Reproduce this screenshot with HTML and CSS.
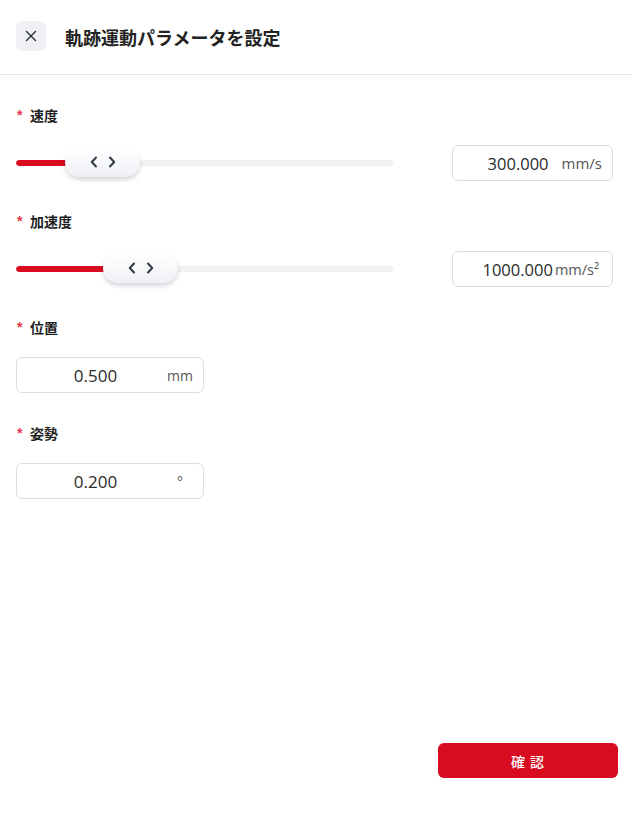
FILE: index.html
```html
<!DOCTYPE html>
<html lang="ja">
<head>
<meta charset="utf-8">
<title>軌跡運動パラメータを設定</title>
<link rel="stylesheet" href="styles.css">
</head>
<body>
<div class="page">
  <header class="header">
    <button class="close" aria-label="close">
      <svg width="12" height="12" viewBox="0 0 12 12"><path d="M1.5 1.5 L10.5 10.5 M10.5 1.5 L1.5 10.5" stroke="#2b2f36" stroke-width="1.4" stroke-linecap="round" fill="none"/></svg>
    </button>
    <h1 class="title">軌跡運動パラメータを設定</h1>
  </header>

  <main class="content">
    <section class="field">
      <div class="label"><span class="star">*</span>速度</div>
      <div class="row">
        <div class="slider">
          <div class="track"><div class="fill" style="width:52px"></div></div>
          <div class="thumb" style="left:49px">
            <svg width="26" height="12" viewBox="0 0 26 12"><path d="M6 1.5 L1.8 6 L6 10.5 M20 1.5 L24.2 6 L20 10.5" stroke="#333a45" stroke-width="2" stroke-linecap="round" stroke-linejoin="round" fill="none"/></svg>
          </div>
        </div>
        <div class="numbox">
          <span class="val">300.000</span><span class="unit">mm/s</span>
        </div>
      </div>
    </section>

    <section class="field">
      <div class="label"><span class="star">*</span>加速度</div>
      <div class="row">
        <div class="slider">
          <div class="track"><div class="fill" style="width:90px"></div></div>
          <div class="thumb" style="left:87px">
            <svg width="26" height="12" viewBox="0 0 26 12"><path d="M6 1.5 L1.8 6 L6 10.5 M20 1.5 L24.2 6 L20 10.5" stroke="#333a45" stroke-width="2" stroke-linecap="round" stroke-linejoin="round" fill="none"/></svg>
          </div>
        </div>
        <div class="numbox">
          <span class="val">1000.000</span><span class="unit tight">mm/s²</span>
        </div>
      </div>
    </section>

    <section class="field">
      <div class="label"><span class="star">*</span>位置</div>
      <div class="smallbox">
        <span class="sval">0.500</span><span class="sunit">mm</span>
      </div>
    </section>

    <section class="field">
      <div class="label"><span class="star">*</span>姿勢</div>
      <div class="smallbox">
        <span class="sval">0.200</span><span class="sunit">°</span>
      </div>
    </section>
  </main>

  <footer class="footer">
    <button class="confirm">確 認</button>
  </footer>
</div>
</body>
</html>
```

FILE: styles.css
```css
* { box-sizing: border-box; }
html, body { margin: 0; padding: 0; background: #fff; }
body {
  font-family: "Noto Sans CJK JP", "Noto Sans", sans-serif;
  color: #222;
}
.page {
  height: 813px;
  display: flex;
  flex-direction: column;
}
.header {
  height: 75px;
  border-bottom: 1px solid #e2e3e6;
  display: flex;
  align-items: center;
  padding: 0 16px 1px 16px;
  gap: 19px;
}
.close {
  width: 30px;
  height: 30px;
  border: none;
  border-radius: 6px;
  background: #f0f1f5;
  display: flex;
  align-items: center;
  justify-content: center;
  padding: 0;
  margin-top: -1px;
}
.title {
  margin: 0;
  font-size: 18px;
  font-weight: 700;
  color: #222;
  line-height: 24px;
}
.content {
  flex: 1;
  padding: 32px 18px 0 16px;
}
.field { margin-bottom: 32px; }
.label {
  font-size: 14px;
  font-weight: 700;
  line-height: 16px;
  height: 16px;
  margin-bottom: 22px;
  display: flex;
  align-items: center;
  color: #1f1f1f;
}
.star {
  color: #e8334a;
  font-family: "Liberation Sans", sans-serif;
  font-size: 14px;
  width: 14px;
  margin-left: 1px;
  margin-right: -1px;
}
.row {
  display: flex;
  align-items: center;
  justify-content: space-between;
  height: 36px;
}
.slider {
  position: relative;
  width: 378px;
  height: 36px;
  display: flex;
  align-items: center;
}
.track {
  width: 100%;
  height: 6px;
  border-radius: 3px;
  background: #f2f2f4;
  overflow: hidden;
}
.fill {
  height: 100%;
  background: #d90b20;
  border-radius: 3px 0 0 3px;
}
.thumb {
  position: absolute;
  top: 2px;
  width: 75px;
  height: 30px;
  border-radius: 15px;
  background: linear-gradient(#ffffff, #eef0f5);
  box-shadow: 0 3px 4px rgba(30, 40, 60, 0.18), 0 0 1px rgba(0,0,0,0.08);
  display: flex;
  align-items: center;
  justify-content: center;
}
.numbox {
  width: 161px;
  height: 36px;
  border: 1px solid #dcdde1;
  border-radius: 6px;
  display: flex;
  align-items: center;
}
.val {
  flex: 1;
  text-align: right;
  font-family: "Open Sans", sans-serif;
  font-size: 16.5px;
  color: #2a2a2a;
}
.unit {
  font-family: "Open Sans", sans-serif;
  font-size: 15px;
  color: #555;
  padding: 0 10px 0 13px;
}
.unit.tight { padding: 0 13px 0 2px; font-size: 14.5px; }
.smallbox {
  width: 188px;
  height: 36px;
  border: 1px solid #dcdde1;
  border-radius: 6px;
  display: flex;
  align-items: center;
}
.sval {
  flex: 1;
  text-align: center;
  padding-left: 12px;
  font-family: "Open Sans", sans-serif;
  font-size: 17px;
  color: #2a2a2a;
}
.sunit {
  width: 36px;
  margin-right: 5px;
  text-align: center;
  font-family: "Open Sans", sans-serif;
  font-size: 14px;
  color: #555;
}
.footer {
  display: flex;
  justify-content: flex-end;
  padding: 0 13px 35px 0;
}
.confirm {
  width: 180px;
  height: 35px;
  border: none;
  border-radius: 6px;
  background: #d90b20;
  color: #fff;
  font-family: "Noto Sans CJK JP", sans-serif;
  font-size: 14px;
  font-weight: 500;
  letter-spacing: 1px;
}
```
